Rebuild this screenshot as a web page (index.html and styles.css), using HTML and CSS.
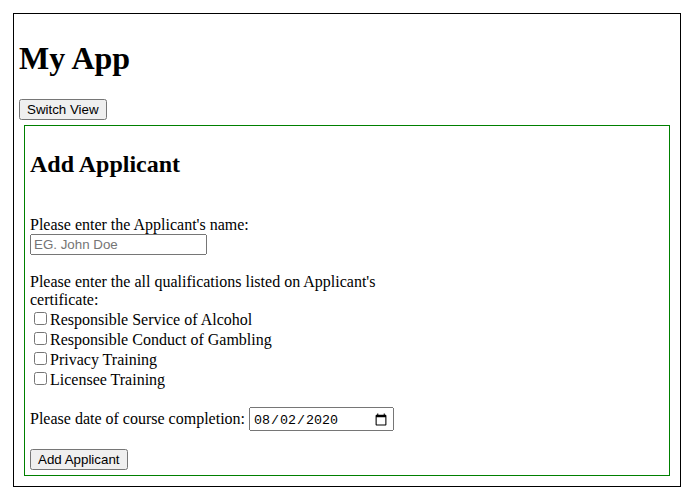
FILE: index.html
```html
<!DOCTYPE html>
<html>
<head>
<meta charset="utf-8">
<title>My App</title>
<link rel="stylesheet" href="styles.css">
</head>
<body>
<div class="app">
  <h1 class="app-title">My App</h1>
  <button class="btn" type="button">Switch View</button>
  <div class="panel">
    <h2 class="panel-title">Add Applicant</h2>
    <form class="form">
      <br>
      <label class="label" for="name">Please enter the Applicant's name:</label><br>
      <input class="text-input" id="name" type="text" placeholder="EG. John Doe"><br><br>
      <div class="wrap-label">Please enter the all qualifications listed on Applicant's certificate:</div>
      <label class="check"><input type="checkbox" class="checkbox">Responsible Service of Alcohol</label><br>
      <label class="check"><input type="checkbox" class="checkbox">Responsible Conduct of Gambling</label><br>
      <label class="check"><input type="checkbox" class="checkbox">Privacy Training</label><br>
      <label class="check"><input type="checkbox" class="checkbox">Licensee Training</label><br>
      <br>
      <label class="label" for="date">Please date of course completion:</label>
      <input class="date-input" id="date" type="date" value="2020-08-02"><br><br>
      <button class="btn" type="button">Add Applicant</button>
    </form>
  </div>
</div>
</body>
</html>
```

FILE: styles.css
```css
body {
  margin: 8px;
  font-family: "Liberation Serif", "Times New Roman", serif;
  font-size: 16px;
  color: #000;
  background: #fff;
}

.app {
  margin: 5px;
  padding: 5px;
  border: 1px solid #000;
}

.app-title {
  font-size: 32px;
  margin: 21.44px 0;
}

.btn {
  font-family: "Liberation Sans", Arial, sans-serif;
  font-size: 13.333px;
}

.panel {
  margin: 5px;
  padding: 5px;
  border: 1px solid green;
}

.panel-title {
  font-size: 24px;
  margin: 19.92px 0;
}

.text-input {
  box-sizing: border-box;
  width: 177px;
  height: 21px;
  font-family: "Liberation Sans", Arial, sans-serif;
  font-size: 13.333px;
}

.text-input::placeholder {
  color: #757575;
}

.wrap-label {
  width: 380px;
}

.date-input {
  box-sizing: border-box;
  width: 145px;
  height: 24px;
  padding: 3px 2px 0;
  font-family: "Liberation Mono", "DejaVu Sans Mono", monospace;
  font-size: 13.333px;
}

.date-input::-webkit-calendar-picker-indicator {
  width: 14px;
  height: 15px;
  padding: 0;
  margin-right: 2px;
}
```
